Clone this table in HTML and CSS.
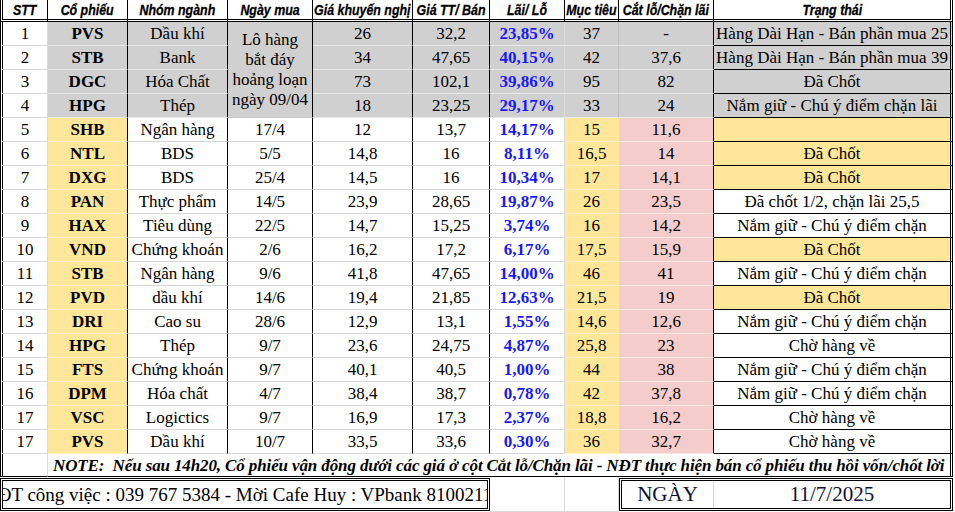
FILE: index.html
```html
<!DOCTYPE html>
<html lang="vi">
<head>
<meta charset="utf-8">
<title>Danh mục cổ phiếu</title>
<link rel="stylesheet" href="styles.css">
</head>
<body>
<div class="sheet">
  <div class="c h first"><span class="hn">STT</span></div>
  <div class="c h"><span class="hn">Cổ phiếu</span></div>
  <div class="c h"><span class="hn">Nhóm ngành</span></div>
  <div class="c h"><span class="hn">Ngày mua</span></div>
  <div class="c h"><span class="hn">Giá khuyến nghị</span></div>
  <div class="c h"><span class="hn">Giá TT/ Bán</span></div>
  <div class="c h"><span class="hn">Lãi/ Lỗ</span></div>
  <div class="c h"><span class="hn">Mục tiêu</span></div>
  <div class="c h"><span class="hn">Cắt lỗ/Chặn lãi</span></div>
  <div class="c h last"><span class="hn">Trạng thái</span></div>

  <div class="c first stt">1</div>
  <div class="c gray b">PVS</div>
  <div class="c gray">Dầu khí</div>
  <div class="c gray merge">Lô hàng<br>bắt đáy<br>hoảng loạn<br>ngày 09/04</div>
  <div class="c gray">26</div>
  <div class="c gray">32,2</div>
  <div class="c gray ll">23,85%</div>
  <div class="c gray soft">37</div>
  <div class="c gray">-</div>
  <div class="c gray tt last">Hàng Dài Hạn - Bán phần mua 25</div>

  <div class="c first stt">2</div>
  <div class="c gray b">STB</div>
  <div class="c gray">Bank</div>
  <div class="c gray">34</div>
  <div class="c gray">47,65</div>
  <div class="c gray ll">40,15%</div>
  <div class="c gray soft">42</div>
  <div class="c gray">37,6</div>
  <div class="c gray tt last">Hàng Dài Hạn - Bán phần mua 39</div>

  <div class="c first stt">3</div>
  <div class="c gray b">DGC</div>
  <div class="c gray">Hóa Chất</div>
  <div class="c gray">73</div>
  <div class="c gray">102,1</div>
  <div class="c gray ll">39,86%</div>
  <div class="c gray soft">95</div>
  <div class="c gray">82</div>
  <div class="c gray tt last">Đã Chốt</div>

  <div class="c first stt">4</div>
  <div class="c gray b">HPG</div>
  <div class="c gray">Thép</div>
  <div class="c gray">18</div>
  <div class="c gray">23,25</div>
  <div class="c gray ll">29,17%</div>
  <div class="c gray soft">33</div>
  <div class="c gray">24</div>
  <div class="c gray tt last">Nắm giữ - Chú ý điểm chặn lãi</div>

  <div class="c first stt">5</div>
  <div class="c tk">SHB</div>
  <div class="c">Ngân hàng</div>
  <div class="c">17/4</div>
  <div class="c">12</div>
  <div class="c">13,7</div>
  <div class="c ll">14,17%</div>
  <div class="c mt">15</div>
  <div class="c cl">11,6</div>
  <div class="c tt ty last"></div>

  <div class="c first stt">6</div>
  <div class="c tk">NTL</div>
  <div class="c">BDS</div>
  <div class="c">5/5</div>
  <div class="c">14,8</div>
  <div class="c">16</div>
  <div class="c ll">8,11%</div>
  <div class="c mt">16,5</div>
  <div class="c cl">14</div>
  <div class="c tt ty last">Đã Chốt</div>

  <div class="c first stt">7</div>
  <div class="c tk">DXG</div>
  <div class="c">BDS</div>
  <div class="c">25/4</div>
  <div class="c">14,5</div>
  <div class="c">16</div>
  <div class="c ll">10,34%</div>
  <div class="c mt">17</div>
  <div class="c cl">14,1</div>
  <div class="c tt ty last">Đã Chốt</div>

  <div class="c first stt">8</div>
  <div class="c tk">PAN</div>
  <div class="c">Thực phẩm</div>
  <div class="c">14/5</div>
  <div class="c">23,9</div>
  <div class="c">28,65</div>
  <div class="c ll">19,87%</div>
  <div class="c mt">26</div>
  <div class="c cl">23,5</div>
  <div class="c tt last">Đã chốt 1/2, chặn lãi 25,5</div>

  <div class="c first stt">9</div>
  <div class="c tk">HAX</div>
  <div class="c">Tiêu dùng</div>
  <div class="c">22/5</div>
  <div class="c">14,7</div>
  <div class="c">15,25</div>
  <div class="c ll">3,74%</div>
  <div class="c mt">16</div>
  <div class="c cl">14,2</div>
  <div class="c tt last">Nắm giữ - Chú ý điểm chặn</div>

  <div class="c first stt">10</div>
  <div class="c tk">VND</div>
  <div class="c">Chứng khoán</div>
  <div class="c">2/6</div>
  <div class="c">16,2</div>
  <div class="c">17,2</div>
  <div class="c ll">6,17%</div>
  <div class="c mt">17,5</div>
  <div class="c cl">15,9</div>
  <div class="c tt ty last">Đã Chốt</div>

  <div class="c first stt">11</div>
  <div class="c tk">STB</div>
  <div class="c">Ngân hàng</div>
  <div class="c">9/6</div>
  <div class="c">41,8</div>
  <div class="c">47,65</div>
  <div class="c ll">14,00%</div>
  <div class="c mt">46</div>
  <div class="c cl">41</div>
  <div class="c tt last">Nắm giữ - Chú ý điểm chặn</div>

  <div class="c first stt">12</div>
  <div class="c tk">PVD</div>
  <div class="c">dầu khí</div>
  <div class="c">14/6</div>
  <div class="c">19,4</div>
  <div class="c">21,85</div>
  <div class="c ll">12,63%</div>
  <div class="c mt">21,5</div>
  <div class="c cl">19</div>
  <div class="c tt ty last">Đã Chốt</div>

  <div class="c first stt">13</div>
  <div class="c tk">DRI</div>
  <div class="c">Cao su</div>
  <div class="c">28/6</div>
  <div class="c">12,9</div>
  <div class="c">13,1</div>
  <div class="c ll">1,55%</div>
  <div class="c mt">14,6</div>
  <div class="c cl">12,6</div>
  <div class="c tt last">Nắm giữ - Chú ý điểm chặn</div>

  <div class="c first stt">14</div>
  <div class="c tk">HPG</div>
  <div class="c">Thép</div>
  <div class="c">9/7</div>
  <div class="c">23,6</div>
  <div class="c">24,75</div>
  <div class="c ll">4,87%</div>
  <div class="c mt">25,8</div>
  <div class="c cl">23</div>
  <div class="c tt last">Chờ hàng về</div>

  <div class="c first stt">15</div>
  <div class="c tk">FTS</div>
  <div class="c">Chứng khoán</div>
  <div class="c">9/7</div>
  <div class="c">40,1</div>
  <div class="c">40,5</div>
  <div class="c ll">1,00%</div>
  <div class="c mt">44</div>
  <div class="c cl">38</div>
  <div class="c tt last">Nắm giữ - Chú ý điểm chặn</div>

  <div class="c first stt">16</div>
  <div class="c tk">DPM</div>
  <div class="c">Hóa chất</div>
  <div class="c">4/7</div>
  <div class="c">38,4</div>
  <div class="c">38,7</div>
  <div class="c ll">0,78%</div>
  <div class="c mt">42</div>
  <div class="c cl">37,8</div>
  <div class="c tt last">Nắm giữ - Chú ý điểm chặn</div>

  <div class="c first stt">17</div>
  <div class="c tk">VSC</div>
  <div class="c">Logictics</div>
  <div class="c">9/7</div>
  <div class="c">16,9</div>
  <div class="c">17,3</div>
  <div class="c ll">2,37%</div>
  <div class="c mt">18,8</div>
  <div class="c cl">16,2</div>
  <div class="c tt last">Chờ hàng về</div>

  <div class="c first stt">17</div>
  <div class="c tk">PVS</div>
  <div class="c">Dầu khí</div>
  <div class="c">10/7</div>
  <div class="c">33,5</div>
  <div class="c">33,6</div>
  <div class="c ll">0,30%</div>
  <div class="c mt">36</div>
  <div class="c cl">32,7</div>
  <div class="c tt last">Chờ hàng về</div>

  <div class="c first stt noteside"></div>
  <div class="c note last">NOTE:&nbsp; Nếu sau 14h20, Cổ phiếu vận động dưới các giá ở cột Cắt lỗ/Chặn lãi - NĐT thực hiện bán cổ phiếu thu hồi vốn/chốt lời</div>

  <div class="fleft">ĐT công việc : 039 767 5384 - Mời Cafe Huy : VPbank 8100211</div>
  <div class="fe"></div>
  <div class="fe"></div>
  <div class="fdate"><span class="fk">NGÀY</span><span class="fv">11/7/2025</span></div>
</div>
</body>
</html>
```

FILE: styles.css
```css
body {
  margin: 0;
  background: #ffffff;
}

.sheet {
  display: grid;
  grid-template-columns: 48px 80px 100px 85px 100px 77px 75px 54px 95px 239px;
  grid-template-rows: 22px repeat(18, 24px) 23px 35px;
  width: 953px;
  font-family: "Liberation Serif", "Times New Roman", serif;
  font-size: 17px;
  color: #000000;
}

.c {
  box-sizing: border-box;
  display: flex;
  align-items: center;
  justify-content: center;
  white-space: nowrap;
  overflow: hidden;
  border-right: 1px solid #000000;
  border-bottom: 1px solid #d9d9d9;
  padding-top: 1px;
}

.h {
  font-family: "Liberation Sans", Arial, sans-serif;
  font-weight: bold;
  font-style: italic;
  font-size: 15.5px;
  border-bottom: 3px double #000000;
  padding-top: 0;
}

.hn {
  display: inline-block;
  transform: scaleX(0.8);
  transform-origin: center;
  -webkit-text-stroke: 0.3px #000000;
}

.first {
  border-left: 3px double #000000;
}

.stt {
  border-right-color: #d9d9d9;
}

.b {
  font-weight: bold;
}

.gray {
  background: #d0d0d0;
  border-bottom-color: #e9e9e9;
}

.soft {
  border-right-color: #bdbdbd;
}

.merge {
  grid-row: span 4;
  white-space: normal;
  text-align: center;
  line-height: 20px;
  border-bottom-color: #c8c8c8;
}

.tk {
  font-weight: bold;
  background: #ffe699;
  border-right-color: #000000;
  border-bottom-color: #fff0c8;
}

.ll {
  font-weight: bold;
  color: #1818ff;
  border-right-color: #d9d9d9;
}

.mt {
  background: #ffe699;
  border-right-color: #ffe699;
  border-bottom-color: #fff0c8;
}

.cl {
  background: #f4cccc;
  border-bottom-color: #fae4e4;
}

.tt {
  border-bottom-color: #000000;
}

.ty {
  background: #ffe699;
}

.last {
  border-right: 3px double #000000;
}

.noteside {
  border-bottom: 1px solid #000000;
}

.note {
  grid-column: 2 / 11;
  justify-content: flex-start;
  padding-left: 5px;
  font-weight: bold;
  font-style: italic;
  letter-spacing: -0.12px;
  border-bottom: 1px solid #000000;
}

.fleft {
  grid-column: 1 / 7;
  box-sizing: border-box;
  margin-top: 1px;
  height: 33px;
  border: 3px double #000000;
  display: flex;
  align-items: center;
  justify-content: center;
  white-space: nowrap;
  overflow: hidden;
  font-size: 19px;
}

.fe {
  box-sizing: border-box;
  border-right: 1px solid #d9d9d9;
  border-bottom: 1px solid #d9d9d9;
}

.fdate {
  grid-column: 9 / 11;
  box-sizing: border-box;
  margin-top: 1px;
  height: 33px;
  border: 3px double #000000;
  display: flex;
  font-size: 21px;
  color: #10103a;
}

.fk {
  box-sizing: border-box;
  width: 92px;
  border-right: 1px solid #d9d9d9;
  display: flex;
  align-items: center;
  justify-content: center;
}

.fv {
  flex: 1;
  display: flex;
  align-items: center;
  justify-content: center;
}
```
